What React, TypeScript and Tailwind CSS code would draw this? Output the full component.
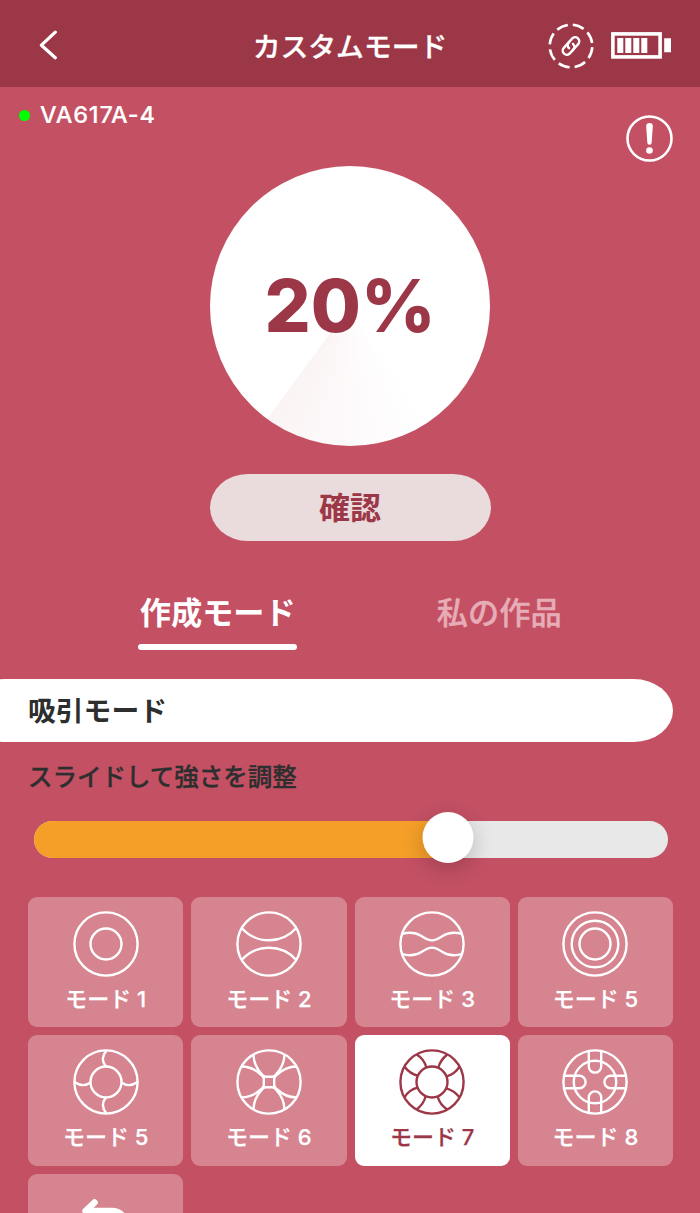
import { useState } from "react";

type Mode = {
  id: number;
  label: string;
  icon: React.ReactNode;
};

const quarters = [0, 90, 180, 270];

const modes: Mode[] = [
  { id: 1, label: "モード 1", icon: <circle r="15.5" /> },
  {
    id: 2,
    label: "モード 2",
    icon: (
      <>
        <path d="M-27.3 -16A36.5 36.5 0 0 0 27.3 -16" />
        <path d="M-27.3 16A36.5 36.5 0 0 1 27.3 16" />
      </>
    ),
  },
  {
    id: 3,
    label: "モード 3",
    icon: (
      <>
        <path d="M-29.8 -10.2C-22 -12.3 -16 -11.5 -10.5 -8C-6 -5 -4 -3.6 0 -3.6C4 -3.6 6 -5 10.5 -8C16 -11.5 22 -12.3 29.8 -10.2" />
        <path d="M-29.8 10.2C-22 12.3 -16 11.5 -10.5 8C-6 5 -4 3.6 0 3.6C4 3.6 6 5 10.5 8C16 11.5 22 12.3 29.8 10.2" />
      </>
    ),
  },
  {
    id: 4,
    label: "モード 5",
    icon: (
      <>
        <circle r="23.3" />
        <circle r="15.5" />
      </>
    ),
  },
  {
    id: 5,
    label: "モード 5",
    icon: (
      <>
        <circle r="15.5" />
        <path d="M0.5 -31.5Q-6.5 -23 0 -15.5M0 15.5Q-6.5 23 0.5 31.5" />
        <path d="M-31.5 0Q-23 6 -15.5 0.5M15.5 0.5Q23 6 31.5 0" />
      </>
    ),
  },
  {
    id: 6,
    label: "モード 6",
    icon: quarters.map((angle) => (
      <path
        key={angle}
        transform={`rotate(${angle})`}
        d="M-15.5 -27.5C-15.3 -19 -11.5 -12.5 -7.5 -8.2Q-5.5 -5.2 -3 -5.2H3Q5.5 -5.2 7.5 -8.2C11.5 -12.5 15.3 -19 15.5 -27.5"
      />
    )),
  },
  {
    id: 7,
    label: "モード 7",
    icon: (
      <>
        <circle r="15.5" />
        {quarters.map((angle) => (
          <path
            key={angle}
            transform={`rotate(${angle})`}
            d="M-15.3 -27.5Q-8 -23 -5.7 -14.8M-27.5 -15.3Q-22 -8.3 -14.3 -6.3"
          />
        ))}
      </>
    ),
  },
  {
    id: 8,
    label: "モード 8",
    icon: (
      <>
        <circle r="21.2" />
        {quarters.map((angle) => (
          <path
            key={angle}
            transform={`rotate(${angle})`}
            d="M-6.2 -31V-15.6A6.2 6.2 0 0 0 6.2 -15.6V-31"
          />
        ))}
      </>
    ),
  },
];

function Header() {
  return (
    <header className="grid h-[87px] grid-cols-[1fr_auto_1fr] items-center bg-[#9c3748] pt-1">
      <button className="ml-[38px] w-fit" aria-label="Back">
        <svg className="h-8 w-5" viewBox="0 0 20 32" fill="none" stroke="currentColor" strokeWidth="3.2" strokeLinecap="round" strokeLinejoin="round">
          <path d="M17.3 2.2L3.4 15.2L17.3 27.8" />
        </svg>
      </button>
      <h1 className="mt-[5px] text-[27.8px] font-medium leading-none [-webkit-text-stroke:0.3px]">カスタムモード</h1>
      <div className="mr-[28px] flex items-center justify-end gap-[17px]">
        <svg className="h-[46px] w-[46px]" viewBox="-23 -23 46 46" fill="none" stroke="currentColor">
          <circle r="21.3" strokeWidth="2.6" strokeDasharray="11.6 5.13" strokeDashoffset="-1.2" />
          <g transform="rotate(-48)" strokeWidth="2.4" strokeLinecap="round">
            <path d="M2 -4.1H-6.2A4.1 4.1 0 0 0 -6.2 4.1H-1.2A4.1 4.1 0 0 0 2.9 0" />
            <path d="M-2 4.1H6.2A4.1 4.1 0 0 0 6.2 -4.1H1.2A4.1 4.1 0 0 0 -2.9 0" />
          </g>
        </svg>
        <svg className="h-[27px] w-[61px]" viewBox="0 0 61 27">
          <rect x="1.9" y="1.9" width="47.2" height="23" fill="none" stroke="currentColor" strokeWidth="3.6" />
          <path fill="currentColor" d="M6.3 6h6v15h-6zM14.3 6h6v15h-6zM22.3 6h6v15h-6zM30.3 6h6v15h-6zM53.2 6.3h6.8v14h-6.8z" />
        </svg>
      </div>
    </header>
  );
}

export default function App() {
  const [activeMode, setActiveMode] = useState(7);
  const [strength] = useState(65.3);

  return (
    <div className="h-[1213px] w-[700px] overflow-hidden bg-[#c45064] font-['Inter','Noto_Sans_CJK_JP',sans-serif] text-white">
      <Header />

      <div className="flex h-[78.5px] items-start justify-between pl-[19px] pr-[27px]">
        <div className="mt-[14px] flex items-center gap-[10px]">
          <span className="h-[11px] w-[11px] rounded-full bg-[#00ff00]" />
          <span className="text-[23.5px] font-medium leading-7 tracking-[0.8px] [-webkit-text-stroke:0.2px]">VA617A-4</span>
        </div>
        <svg className="mt-[28px] h-[47px] w-[47px]" viewBox="-23.5 -23.5 47 47">
          <circle r="22" fill="none" stroke="currentColor" strokeWidth="2.6" />
          <path fill="currentColor" d="M-3.3 -12.2A3.3 3.3 0 0 1 3.3 -12.2L2.2 4A2.2 2.2 0 0 1 -2.2 4Z" />
          <circle cy="12" r="3.3" fill="currentColor" />
        </svg>
      </div>

      <div className="mx-auto flex h-[280px] w-[280px] items-center justify-center rounded-full bg-[conic-gradient(#fff_0deg,#fff_145deg,#fbf4f5_216deg,#fff_216.5deg)]">
        <span className="pt-[2px] text-[72.5px] font-extrabold leading-none text-[#9c3748]">20%</span>
      </div>

      <button className="mx-auto mt-[28px] flex h-[67.5px] w-[281px] items-center justify-center rounded-[38px/33.7px] bg-[#eadbdc] pt-[2px] text-[31px] font-bold text-[#9c3748]">
        確認
      </button>

      <div className="mt-[50px] grid grid-cols-2 pl-[77px] pr-[60px] text-[31.2px] leading-[44px]">
        <button className="mx-auto flex flex-col items-center font-bold">
          作成モード
          <span className="mt-[9px] h-[5.5px] w-[159px] rounded-full bg-white" />
        </button>
        <button className="mx-auto self-start font-medium text-[#e6adb7] [-webkit-text-stroke:0.4px]">私の作品</button>
      </div>

      <h2 className="-ml-[34px] mt-[29px] flex h-[63.5px] w-[707px] items-center rounded-[40px/32px] bg-white pl-[62px] pt-[3px] text-[27.8px] font-bold text-[#2d2e2e]">
        吸引モード
      </h2>
      <p className="ml-[28px] mt-[17px] text-[24.5px] font-medium leading-9 text-[#2d2e2e] [-webkit-text-stroke:0.3px]">
        スライドして強さを調整
      </p>

      <div className="relative ml-[33.5px] mt-[25.5px] h-[37.5px] w-[634px]">
        <div className="h-full overflow-hidden rounded-[19px] bg-[#e8e8e8]">
          <div className="h-full bg-[#f59f28]" style={{ width: `${strength}%` }} />
        </div>
        <div
          className="absolute -top-[9px] h-[51px] w-[51px] -translate-x-1/2 rounded-full bg-white shadow-[0_6px_22px_rgba(0,0,0,0.2)]"
          style={{ left: `${strength}%` }}
        />
      </div>

      <div className="ml-[28px] mt-[39px] grid w-[645px] auto-rows-[130.4px] grid-cols-4 gap-2">
        {modes.map((mode) => (
          <button
            key={mode.id}
            onClick={() => setActiveMode(mode.id)}
            className={`flex flex-col items-center rounded-[9px] pt-[13.5px] ${
              activeMode === mode.id ? "bg-white text-[#9c3748]" : "bg-[#d58490]"
            }`}
          >
            <svg className="h-[66px] w-[66px]" viewBox="-33 -33 66 66" fill="none" stroke="currentColor" strokeWidth="2.4">
              <circle r="31.6" />
              {mode.icon}
            </svg>
            <span className="mt-[6px] text-[22px] font-medium leading-8 [-webkit-text-stroke:0.25px]">{mode.label}</span>
          </button>
        ))}
        <button className="flex flex-col items-center rounded-[9px] bg-[#d58490] pt-[24px]" aria-label="Undo">
          <svg className="h-[50px] w-[50px]" viewBox="0 0 50 50" fill="none" stroke="currentColor" strokeWidth="6.5" strokeLinecap="round" strokeLinejoin="round">
            <path d="M13.5 4.5L4.5 13L13.5 22M5 13H31A14 14 0 0 1 31 41H10" />
          </svg>
        </button>
      </div>
    </div>
  );
}
